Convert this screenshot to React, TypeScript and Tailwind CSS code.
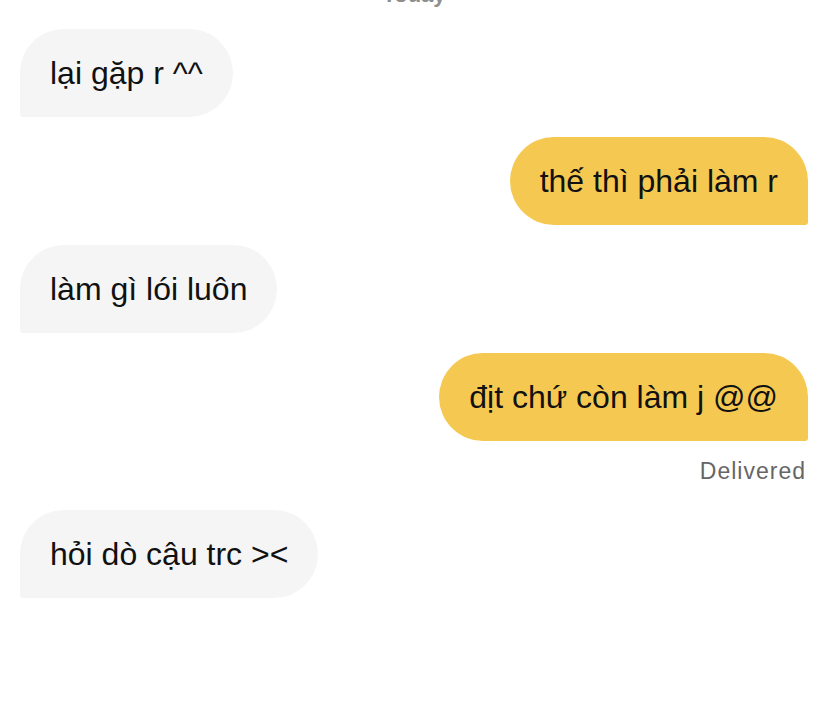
import React from "react";

const font = { fontFamily: '"Liberation Sans", Arial, sans-serif' };

function In({ text }: { text: string }) {
  return (
    <div className="flex justify-start">
      <div className="h-[88px] px-[30px] flex items-center bg-[#f5f5f5] text-[#111111] text-[32px] leading-[38px] rounded-[44px] rounded-bl-[3px]">
        {text}
      </div>
    </div>
  );
}

function Out({ text }: { text: string }) {
  return (
    <div className="flex justify-end">
      <div className="h-[88px] px-[30px] flex items-center bg-[#f5c951] text-[#111111] text-[32px] leading-[38px] rounded-[44px] rounded-br-[3px]">
        {text}
      </div>
    </div>
  );
}

export default function App() {
  return (
    <div className="w-[828px] h-[720px] bg-white overflow-hidden px-[20px]" style={font}>
      <div className="mt-[-18px] text-center text-[22px] leading-[26px] font-semibold text-[#8e8e8e]">Today</div>
      <div className="mt-[21px] flex flex-col gap-[20px]">
        <In text="lại gặp r ^^" />
        <Out text="thế thì phải làm r" />
        <In text="làm gì lói luôn" />
        <Out text="địt chứ còn làm j @@" />
      </div>
      <div className="mt-[17px] text-right pr-[2px] text-[23px] leading-[26px] tracking-[1px] font-medium text-[#666666]">Delivered</div>
      <div className="mt-[26px]">
        <In text="hỏi dò cậu trc ><" />
      </div>
    </div>
  );
}
